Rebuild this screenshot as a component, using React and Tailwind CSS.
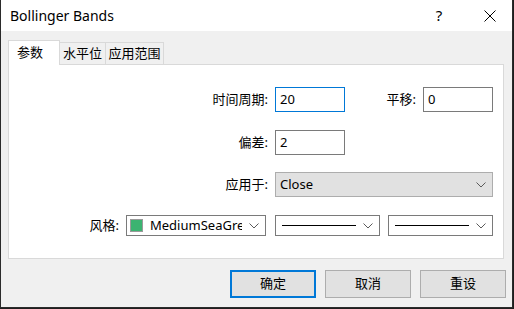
import React from "react";

const font = { fontFamily: '"Segoe UI", "Noto Sans", "Noto Sans CJK SC", sans-serif' };

function Chevron() {
  return (
    <svg width="10" height="6" viewBox="0 0 10 6" className="shrink-0">
      <path d="M0.5 0.5 L5 5 L9.5 0.5" fill="none" stroke="#5a5a5a" strokeWidth="1" />
    </svg>
  );
}

function Field({ value, focused, w }) {
  return (
    <div
      className={`h-[25px] ${w} border bg-white flex items-center pl-[4px] text-[13px] text-black ${
        focused ? "border-[#0078d7]" : "border-[#7a7a7a]"
      }`}
    >
      {value}
    </div>
  );
}

export default function App() {
  return (
    <div className="w-[514px] h-[309px] bg-[#1e1e1e] overflow-hidden" style={font}>
      <div className="w-[513px] h-[308px] bg-[#f0f0f0] border-l border-r border-b border-[#2b2b2b] flex flex-col">
        {/* title bar */}
        <div className="h-[31px] bg-white flex items-center shrink-0">
          <span className="ml-[9px] text-[14px] text-black">Bollinger Bands</span>
          <span className="ml-auto text-[15px] text-black w-[20px] text-center">?</span>
          <svg width="12" height="12" viewBox="0 0 12 12" className="ml-[35px] mr-[16px]">
            <path d="M0.5 0.5 L11.5 11.5 M11.5 0.5 L0.5 11.5" stroke="#000" strokeWidth="1" />
          </svg>
        </div>

        {/* tabs */}
        <div className="ml-[7px] mt-[9px] flex items-end h-[24px]">
          <div className="relative z-10 w-[52px] h-[25px] bg-white border border-b-0 border-[#d9d9d9] text-[13px] flex items-center pl-[8px] -mb-px">
            参数
          </div>
          <div className="w-[46px] h-[22px] border border-l-0 border-b-0 border-[#d9d9d9] bg-[#f0f0f0] text-[13px] flex items-center justify-center">
            水平位
          </div>
          <div className="w-[58px] h-[22px] border border-l-0 border-b-0 border-[#d9d9d9] bg-[#f0f0f0] text-[13px] flex items-center justify-center">
            应用范围
          </div>
        </div>

        {/* panel */}
        <div className="ml-[7px] w-[496px] h-[195px] bg-white border border-[#d9d9d9] text-[13px] text-black flex flex-col pt-[22px]">
          <div className="flex items-center">
            <div className="w-[259px] text-right">时间周期:</div>
            <div className="ml-[7px]">
              <Field value="20" focused w="w-[70px]" />
            </div>
            <div className="w-[71px] text-right">平移:</div>
            <div className="ml-[7px]">
              <Field value="0" w="w-[70px]" />
            </div>
          </div>

          <div className="flex items-center mt-[18px]">
            <div className="w-[259px] text-right">偏差:</div>
            <div className="ml-[7px]">
              <Field value="2" w="w-[70px]" />
            </div>
          </div>

          <div className="flex items-center mt-[17px]">
            <div className="w-[259px] text-right">应用于:</div>
            <div className="ml-[7px] w-[218px] h-[25px] bg-[#e1e1e1] border border-[#adadad] flex items-center pl-[4px] pr-[6px]">
              <span className="flex-1">Close</span>
              <Chevron />
            </div>
          </div>

          <div className="flex items-center mt-[18px]">
            <div className="w-[110px] text-right">风格:</div>
            <div className="ml-[7px] w-[140px] h-[21px] bg-white border border-[#7a7a7a] flex items-center pl-[3px] pr-[6px]">
              <div className="w-[13px] h-[13px] bg-[#3cb371] border border-[#9a9a9a] shrink-0" />
              <span className="ml-[7px] w-[92px] overflow-hidden whitespace-nowrap">MediumSeaGreen</span>
              <span className="ml-auto">
                <Chevron />
              </span>
            </div>
            <div className="ml-[9px] w-[105px] h-[21px] bg-white border border-[#7a7a7a] flex items-center pl-[6px] pr-[6px]">
              <div className="w-[74px] h-px bg-black" />
              <span className="ml-auto">
                <Chevron />
              </span>
            </div>
            <div className="ml-[8px] w-[105px] h-[21px] bg-white border border-[#7a7a7a] flex items-center pl-[6px] pr-[6px]">
              <div className="w-[74px] h-px bg-black" />
              <span className="ml-auto">
                <Chevron />
              </span>
            </div>
          </div>
        </div>

        {/* buttons */}
        <div className="flex justify-end mt-[11px] pr-[6px] gap-[9px] text-[13px] text-black">
          <button className="w-[86px] h-[28px] bg-[#e1e1e1] border-2 border-[#0078d7]">确定</button>
          <button className="w-[86px] h-[28px] bg-[#e1e1e1] border border-[#adadad]">取消</button>
          <button className="w-[86px] h-[28px] bg-[#e1e1e1] border border-[#adadad]">重设</button>
        </div>
      </div>
    </div>
  );
}
